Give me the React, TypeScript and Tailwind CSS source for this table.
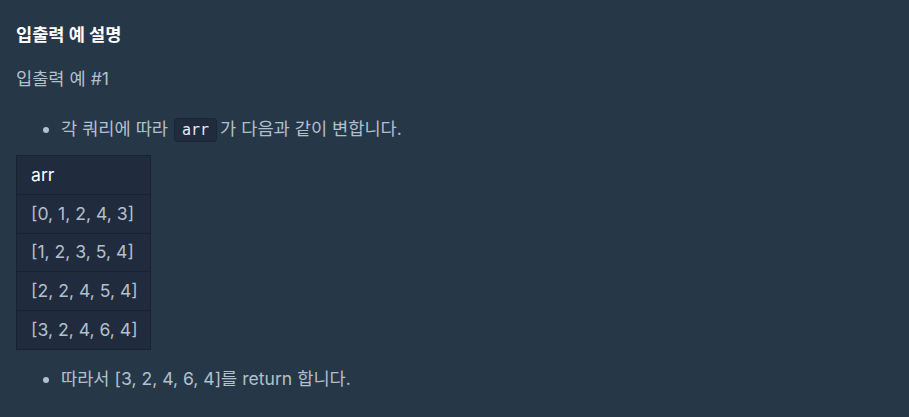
import React from 'react';

const rows = ['[0, 1, 2, 4, 3]', '[1, 2, 3, 5, 4]', '[2, 2, 4, 5, 4]', '[3, 2, 4, 6, 4]'];

const App: React.FC = () => {
  return (
    <div className="min-h-screen w-full bg-[#263747] px-4 pt-[22px] text-[17.6px] leading-[26px] text-[#b2c0cc]" style={{ fontFamily: 'Inter, "Noto Sans CJK KR", sans-serif' }}>
      <h6 className="font-bold text-white">입출력 예 설명</h6>
      <p className="mt-[18px]">입출력 예 #1</p>
      <ul className="mt-[24px] list-disc pl-[45px]">
        <li>
          각 쿼리에 따라{' '}
          <code className="ml-[1px] mr-[3px] rounded-[4px] border border-[#1b2635] bg-[#202b3d] px-[7px] py-[2px] text-[15px] text-[#e9ecf3]" style={{ fontFamily: '"DejaVu Sans Mono", monospace' }}>arr</code>
          가 다음과 같이 변합니다.
        </li>
      </ul>
      <table className="mt-[12px] border-collapse bg-[#202b3d]">
        <thead>
          <tr>
            <th className="h-[38.8px] border border-[#172334] pl-[14px] pr-[12px] text-left font-normal text-white">arr</th>
          </tr>
        </thead>
        <tbody>
          {rows.map(r => (
            <tr key={r}>
              <td className="h-[38.8px] border border-[#172334] pl-[14px] pr-[12px]">{r}</td>
            </tr>
          ))}
        </tbody>
      </table>
      <ul className="mt-[16px] list-disc pl-[45px]">
        <li>따라서 [3, 2, 4, 6, 4]를 return 합니다.</li>
      </ul>
    </div>
  );
};

export default App;
